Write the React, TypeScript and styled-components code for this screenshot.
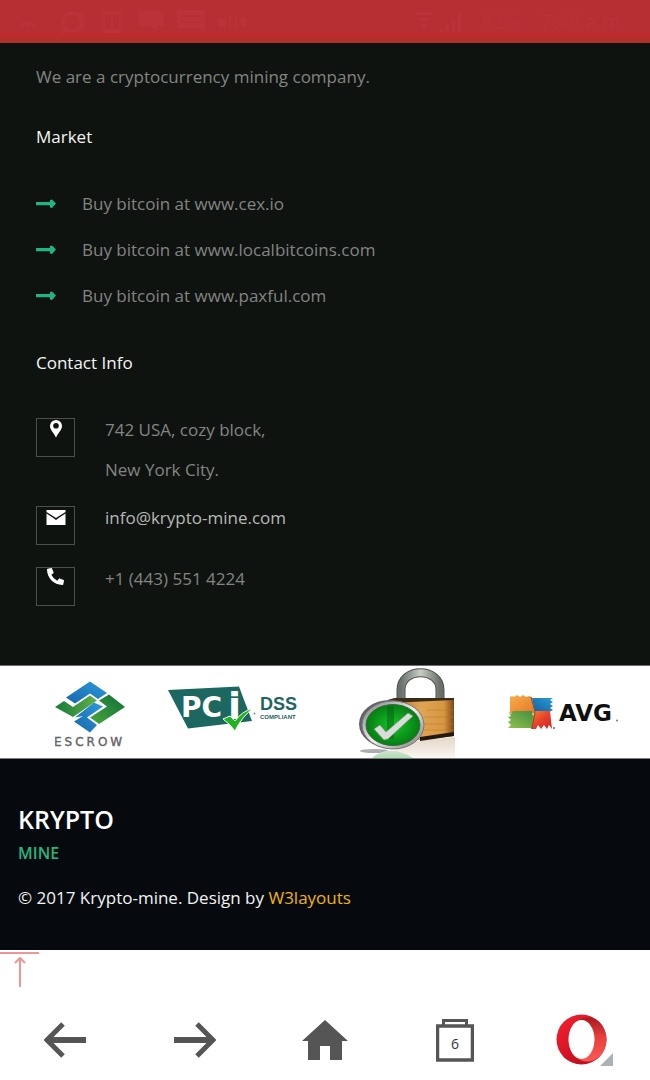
import React from 'react';
import styled, { createGlobalStyle } from 'styled-components';
import { FaPhoneAlt } from 'react-icons/fa';

const GlobalStyle = createGlobalStyle`
  * { box-sizing: border-box; }
  body {
    margin: 0;
    background: #fff;
    font-family: "Open Sans", "Noto Sans", sans-serif;
    font-size: 17px;
  }
  h2, p, ul, address { margin: 0; padding: 0; font-style: normal; }
  ul { list-style: none; }
  a { color: inherit; text-decoration: none; }
  button { font-family: inherit; }
  svg { display: block; flex: none; }
`;

const Page = styled.div`
  display: flex;
  flex-direction: column;
  min-height: 100vh;
`;

const StatusBar = styled.header`
  display: flex;
  align-items: center;
  justify-content: space-between;
  height: 43px;
  padding: 0 24px 0 18px;
  color: #b93338;
  background: linear-gradient(#b62f33 33px, #c2292d 33px, #c2292d 36px, #b0302a 37px);
`;

const StatusGroup = styled.div`
  display: flex;
  align-items: center;
  gap: 20px;
  font-size: 20px;
`;

const Info = styled.main`
  padding: 13px 36px 53px;
  background: #0e130f;
  color: #828583;
`;

const Tagline = styled.p`
  line-height: 42px;
`;

const Heading = styled.h2`
  margin-top: ${(p: { $gap: number }) => p.$gap}px;
  color: #f4f6f4;
  font-size: 17px;
  font-weight: 400;
  line-height: 24px;
`;

const MarketList = styled.ul`
  margin-top: 32px;
`;

const MarketItem = styled.li`
  display: flex;
  align-items: center;
  gap: 26px;
  line-height: 46px;
`;

const ContactList = styled.ul`
  display: flex;
  flex-direction: column;
  gap: 8px;
  margin-top: 35px;
`;

const ContactItem = styled.li`
  display: flex;
  gap: 30px;
  line-height: 40px;
`;

const IconBox = styled.span`
  display: flex;
  justify-content: center;
  flex: none;
  width: 39px;
  height: 39px;
  margin: 8px 0 6px;
  border: 1px solid #4b504c;
  color: #fff;
`;

const MailLink = styled.a`
  color: #b5bab6;
`;

const Badges = styled.section`
  display: flex;
  align-items: center;
  justify-content: space-between;
  height: 94px;
  padding: 0 32px 0 55px;
  border-top: 1px solid #6b6e6b;
  border-bottom: 1px solid #7a7d7f;
  background: #fff;
`;

const Footer = styled.footer`
  height: 191px;
  padding: 42px 18px 0;
  background: #060a0e;
  color: #f2f4f4;
`;

const Brand = styled.a`
  display: block;
  color: #fff;
  font-size: 25px;
  font-weight: 600;
  line-height: 36px;
`;

const BrandSub = styled.span`
  display: block;
  color: #27b57d;
  font-size: 16px;
  font-weight: 600;
  line-height: 32px;
`;

const Copyright = styled.p`
  margin-top: 17px;
  line-height: 24px;
`;

const DesignLink = styled.a`
  color: #f0b310;
`;

const ToTop = styled.a`
  display: flex;
  justify-content: center;
  width: 39px;
  height: 36px;
  margin-top: 2px;
  border-top: 2px solid #ef9595;
`;

const BrowserNav = styled.nav`
  display: grid;
  grid-template-columns: repeat(5, 1fr);
  flex: 1;
  min-height: 92px;
  padding-top: 12px;
`;

const NavButton = styled.button`
  display: flex;
  align-items: center;
  justify-content: center;
  height: 80px;
  padding: 0;
  border: 0;
  background: none;
  color: #555;
`;

const TabCount = styled.span`
  position: relative;
  display: grid;
  place-items: center;
  width: 38px;
  height: 44px;
  padding-top: 6px;
  color: #333;
  font-size: 14px;

  svg { position: absolute; inset: 0; }
`;

const Arrow = () => (
  <svg width="20" height="10" viewBox="0 0 20 10" fill="#21b581" aria-hidden="true">
    <path d="M0 3H14V1L16 .4 20 4.600 16 9 14 8.500V6.200H0Z" />
  </svg>
);

const Pin = () => (
  <svg width="12" height="20" viewBox="0 0 12 20" fill="currentColor" aria-hidden="true">
    <path fillRule="evenodd" d="M6 1A6 6 0 0 0 0 7C0 11 4 14 6 18.500C8 14 12 11 12 7A6 6 0 0 0 6 1ZM6 4A2.800 2.800 0 1 1 6 9.600A2.800 2.800 0 0 1 6 4Z" />
  </svg>
);

const Envelope = () => (
  <svg width="20" height="20" viewBox="0 0 20 20" fill="currentColor" aria-hidden="true">
    <path d="M.5 3H19.500V5L10 11 .5 5Z" />
    <path d="M.5 6.600 7 10.800 10 13 13 10.800 19.500 6.600V18H.5Z" />
  </svg>
);

const EscrowLogo = () => (
  <svg width="72" height="80" viewBox="55 672 72 80" role="img" aria-label="Escrow">
    <defs>
      <linearGradient id="escrowBlue" x1="0" y1="1" x2="1" y2="0">
        <stop offset="0" stopColor="#1766ae" /><stop offset="1" stopColor="#2c9bd8" />
      </linearGradient>
      <linearGradient id="escrowLeft" x1="0" x2="1">
        <stop offset="0" stopColor="#167a38" /><stop offset="1" stopColor="#62b04a" />
      </linearGradient>
      <linearGradient id="escrowRight" x1="0" x2="1" y1="1" y2="0">
        <stop offset="0" stopColor="#4aa640" /><stop offset="1" stopColor="#0d6f36" />
      </linearGradient>
    </defs>
    <path d="M66 697.500 90 681.500 107 693 98 699 90 693.500 75 703.500Z" fill="url(#escrowBlue)" />
    <path d="M55 707 64 701 73 707 90 695.500 97 700.500 73 717Z" fill="url(#escrowLeft)" />
    <path d="M99 700.500 109 694.500 125 707 99 724 90 717.500 107 706.500Z" fill="url(#escrowRight)" />
    <path d="M94 702.500 103 706.500 87 717.500 97 725 90 732.500 74 721.500 83 716 75 717.500Z" fill="url(#escrowBlue)" />
    <text x="54" y="746" fontFamily="DejaVu Sans, sans-serif" fontSize="12" letterSpacing="3" fill="#666" stroke="#666" strokeWidth=".4">ESCROW</text>
  </svg>
);

const PciLogo = () => (
  <svg width="142" height="80" viewBox="167 672 142 80" role="img" aria-label="PCI DSS compliant">
    <path d="M168 690 239 686.500 252 721 188 728.500Z" fill="#1c675f" />
    <text x="181" y="717" fontFamily="DejaVu Sans, sans-serif" fontWeight="700" fill="#fff">
      <tspan fontSize="28">PC</tspan>
      <tspan x="228" y="719" fontSize="38">i</tspan>
    </text>
    <path d="M223 719 230 716 235 721Q241 712 253 708Q241 718 235 731Q230 724 223 719Z" fill="#20b51e" stroke="#fff" strokeWidth="1" />
    <circle cx="254.500" cy="713.500" r="1" fill="#888" />
    <g fontFamily="Liberation Sans, sans-serif" fontWeight="700" fill="#1f6660">
      <text x="260" y="710" fontSize="18">DSS</text>
      <text x="260" y="719" fontSize="6">COMPLIANT</text>
    </g>
  </svg>
);

const PadlockLogo = () => (
  <svg width="118" height="92" viewBox="349 666 118 92" role="img" aria-label="Secure padlock">
    <defs>
      <linearGradient id="steel"><stop offset="0" stopColor="#6b716c" /><stop offset=".5" stopColor="#c8ccc5" /><stop offset="1" stopColor="#6b6f6a" /></linearGradient>
      <linearGradient id="brass"><stop offset="0" stopColor="#a8671f" /><stop offset=".5" stopColor="#e0a455" /><stop offset=".85" stopColor="#d8963f" /><stop offset="1" stopColor="#7a4715" /></linearGradient>
      <linearGradient id="rim" x1="0" x2="1" y1="0" y2="1"><stop offset="0" stopColor="#777" /><stop offset=".5" stopColor="#eee" /><stop offset="1" stopColor="#777" /></linearGradient>
      <radialGradient id="greenFace"><stop offset="0" stopColor="#15c528" /><stop offset="1" stopColor="#067d13" /></radialGradient>
      <linearGradient id="reflection" x1="0" y1="0" x2="0" y2="1"><stop offset="0" stopColor="#c9ad8b" /><stop offset="1" stopColor="#f5eee6" /></linearGradient>
      <linearGradient id="greenReflection" x1="0" y1="0" x2="0" y2="1"><stop offset="0" stopColor="#d9dfd9" /><stop offset="1" stopColor="#a9dfae" /></linearGradient>
    </defs>
    <path d="M395 743 455 737V758H395Z" fill="url(#reflection)" opacity=".5" />
    <ellipse cx="374" cy="751" rx="14" ry="2" fill="#777" opacity=".6" />
    <path d="M372 758Q389 743 413 758Z" fill="url(#greenReflection)" />
    <path d="M401 702V690C401 667 440 667 440 690V702" fill="none" stroke="#4d524d" strokeWidth="9" />
    <path d="M401 702V690C401 667 440 667 440 690V702" fill="none" stroke="url(#steel)" strokeWidth="7" />
    <path d="M388 700 395 698H454V736L420 740H388Z" fill="url(#brass)" />
    <path d="M388 700 395 698H454V700L388 703Z" fill="#3b2c17" />
    <path d="M420 737 454 732V736L420 741Z" fill="#21180f" />
    <path d="M427 710H453M424 717H453M424 724H453M424 730H453" stroke="#b87830" strokeWidth="1" opacity=".55" />
    <ellipse cx="390" cy="724" rx="31" ry="24" fill="#62616b" />
    <ellipse cx="393" cy="725" rx="31" ry="24" fill="url(#rim)" stroke="#777" />
    <ellipse cx="393" cy="725" rx="27" ry="20.500" fill="url(#greenFace)" stroke="#376c3b" />
    <path d="M387 706H394V739H387Z" fill="#075b13" opacity=".5" />
    <path d="M374 729 380 725 386 732 408 713 413 716 388 739 384 740Z" fill="#dadcd8" stroke="#789078" strokeWidth=".6" />
  </svg>
);

const AvgLogo = () => (
  <svg width="111" height="50" viewBox="507 687 111 50" role="img" aria-label="AVG">
    <defs>
      <linearGradient id="avgOrange" x1="0" y1="0" x2="1" y2="1"><stop offset="0" stopColor="#f6b04a" /><stop offset="1" stopColor="#e8752a" /></linearGradient>
      <linearGradient id="avgBlue" x1="0" y1="1" x2="1" y2="0"><stop offset="0" stopColor="#12609f" /><stop offset="1" stopColor="#2a9bd6" /></linearGradient>
      <linearGradient id="avgGreen" x1="0" y1="1" x2="1" y2="0"><stop offset="0" stopColor="#93bf4b" /><stop offset="1" stopColor="#3f8f42" /></linearGradient>
      <linearGradient id="avgRed" x1="0" y1="0" x2="1" y2="1"><stop offset="0" stopColor="#f08a2a" /><stop offset=".5" stopColor="#e8402a" /><stop offset="1" stopColor="#c8262a" /></linearGradient>
    </defs>
    <path d="M510 697 512 696 514 697 517 695 520 697 523 695 526 697 529 696 532 697 535 713H510Z" fill="url(#avgOrange)" />
    <path d="M532 698H553L550 700 553 702 550 704 553 706 550 708 553 710 549 712H535Z" fill="url(#avgBlue)" />
    <path d="M508 711 511 714 513 711H532L535 728H508L511 725 508 722 511 720 508 717 511 716Z" fill="url(#avgGreen)" />
    <path d="M534 711H550L552 729 549 725 547 729 544 725 541 729 538 725 536 729 531 729Z" fill="url(#avgRed)" />
    <path d="M531 697 535 712 532 729" fill="none" stroke="#735536" strokeWidth="1" />
    <text x="559" y="721" fontFamily="DejaVu Sans, sans-serif" fontSize="23" fontWeight="700" fill="#101010">AVG</text>
    <circle cx="554" cy="728" r="1" fill="#954" /><circle cx="617" cy="720.500" r="1" fill="#777" />
  </svg>
);

const OperaLogo = () => (
  <svg width="58" height="54" viewBox="0 0 58 54" aria-hidden="true">
    <defs>
      <linearGradient id="operaOuter" x1="0" y1="0" x2="1" y2="1"><stop offset="0" stopColor="#f52331" /><stop offset=".45" stopColor="#d91526" /><stop offset="1" stopColor="#a60c1c" /></linearGradient>
      <linearGradient id="operaInner" x1="0" y1="0" x2="0" y2="1"><stop offset="0" stopColor="#a8181e" /><stop offset=".45" stopColor="#e8403e" /><stop offset="1" stopColor="#ff5752" /></linearGradient>
    </defs>
    <circle cx="25.500" cy="26.500" r="25" fill="url(#operaOuter)" />
    <path d="M17 11C29 0 39 5 44 9.700A25 25 0 0 1 44 43.300C39 48 29 53 17 42Z" fill="url(#operaInner)" />
    <ellipse cx="25.500" cy="26.500" rx="13" ry="19.500" fill="#fff" />
    <path d="M57 40V53H44Z" fill="#adb1b7" />
  </svg>
);

const markets = ['www.cex.io', 'www.localbitcoins.com', 'www.paxful.com'];

export default function App() {
  return (
    <>
      <GlobalStyle />
      <Page>
        <StatusBar>
          <StatusGroup>
            <svg width="230" height="26" viewBox="0 0 230 26" fill="currentColor" aria-hidden="true">
              <path d="M2 18C4 11 8 10 11 14L13 12 20 19 18 20 12 16 9 19 7 15 4 20Z" />
              <path fillRule="evenodd" d="M54 2A12 11 0 1 1 50 23L43 25 45 19A12 11 0 0 1 54 2ZM54 6A8 7 0 1 0 54 20A8 7 0 0 0 54 6Z" />
              <path d="M85 2H103V24H85ZM87 5V20H101V5ZM93 8H95V17H93Z" fillRule="evenodd" />
              <path d="M121 2H146V17H139V22L132 17H121Z" />
              <path d="M159 1H187V24L180 19H159ZM163 6V8H183V6ZM163 12V14H183V12Z" fillRule="evenodd" />
              <path d="M200 10H208V18H200ZM211 6H213V20H211ZM217 6H219V20H217ZM223 9H228V17H223Z" />
            </svg>
          </StatusGroup>
          <StatusGroup>
            <svg width="46" height="24" viewBox="0 0 46 24" fill="currentColor" aria-hidden="true">
              <path d="M0 2H16V5H0ZM3 8H13V11H3ZM6 14H10V20H6ZM24 19H27V22H24ZM30 15H33V22H30ZM36 10H39V22H36ZM42 4H45V22H42Z" />
            </svg>
            <span>92%</span>
            <span>7:40 a.m.</span>
          </StatusGroup>
        </StatusBar>

        <Info>
          <Tagline>We are a cryptocurrency mining company.</Tagline>
          <Heading $gap={27}>Market</Heading>
          <MarketList>
            {markets.map((site) => (
              <MarketItem key={site}><Arrow /><a href={`https://${site}`}>Buy bitcoin at {site}</a></MarketItem>
            ))}
          </MarketList>
          <Heading $gap={32}>Contact Info</Heading>
          <ContactList>
            <ContactItem>
              <IconBox><Pin /></IconBox>
              <address>742 USA, cozy block,<br />New York City.</address>
            </ContactItem>
            <ContactItem>
              <IconBox><Envelope /></IconBox>
              <MailLink href="mailto:info@krypto-mine.com">info@krypto-mine.com</MailLink>
            </ContactItem>
            <ContactItem>
              <IconBox><FaPhoneAlt size={17} aria-hidden="true" /></IconBox>
              <span>+1 (443) 551 4224</span>
            </ContactItem>
          </ContactList>
        </Info>

        <Badges aria-label="Security partners">
          <EscrowLogo />
          <PciLogo />
          <PadlockLogo />
          <AvgLogo />
        </Badges>

        <Footer>
          <Brand href="#">KRYPTO<BrandSub>MINE</BrandSub></Brand>
          <Copyright>© 2017 Krypto-mine. Design by <DesignLink href="#">W3layouts</DesignLink></Copyright>
        </Footer>

        <ToTop href="#" aria-label="Back to top">
          <svg width="12" height="34" viewBox="0 0 12 34" fill="none" stroke="#ef9595" strokeWidth="2" aria-hidden="true">
            <path d="M6 33V5M1 9 6 4 11 9" />
          </svg>
        </ToTop>

        <BrowserNav aria-label="Browser">
          <NavButton aria-label="Back">
            <svg width="42" height="36" viewBox="0 0 42 36" fill="none" stroke="currentColor" strokeWidth="5" aria-hidden="true">
              <path d="M42 18H5" strokeWidth="6" /><path d="M19 2 3 18 19 34" />
            </svg>
          </NavButton>
          <NavButton aria-label="Forward">
            <svg width="42" height="36" viewBox="0 0 42 36" fill="none" stroke="currentColor" strokeWidth="5" aria-hidden="true">
              <path d="M0 18H37" strokeWidth="6" /><path d="M23 2 39 18 23 34" />
            </svg>
          </NavButton>
          <NavButton aria-label="Home">
            <svg width="46" height="40" viewBox="0 0 46 40" fill="currentColor" aria-hidden="true">
              <path d="M23 0 46 21H40V40H28V26H18V40H6V21H0Z" />
            </svg>
          </NavButton>
          <NavButton aria-label="Tabs">
            <TabCount>
              <svg width="38" height="44" viewBox="0 0 38 44" fill="none" stroke="#555" aria-hidden="true">
                <path d="M1.500 8H36.500V42H1.500Z" strokeWidth="3.500" /><path d="M7.500 8V2.500H30.500V8" strokeWidth="3" />
              </svg>
              6
            </TabCount>
          </NavButton>
          <NavButton aria-label="Opera menu"><OperaLogo /></NavButton>
        </BrowserNav>
      </Page>
    </>
  );
}
